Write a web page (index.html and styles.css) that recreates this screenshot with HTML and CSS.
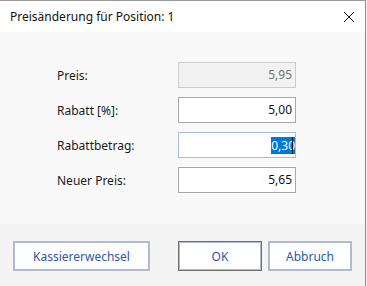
FILE: index.html
```html
<!DOCTYPE html>
<html lang="de">
  <head>
    <meta charset="UTF-8" />
    <title>Preisänderung</title>
    <link rel="stylesheet" href="styles.css">
  </head>
  <body>
    <div class="dialog">
      <div class="titlebar">
        <span class="title">Preisänderung für Position: 1</span>
        <svg class="close" width="12" height="12" viewBox="0 0 12 12">
          <path d="M1 1 L11 11 M11 1 L1 11" stroke="#111" stroke-width="1" fill="none" />
        </svg>
      </div>
      <div class="content">
        <form class="fields">
          <label>Preis:</label>
          <div class="box disabled">5,95</div>

          <label>Rabatt [%]:</label>
          <div class="box">5,00</div>

          <label>Rabattbetrag:</label>
          <div class="box focused"><span class="sel">0,30</span><span class="caret"></span></div>

          <label>Neuer Preis:</label>
          <div class="box">5,65</div>
        </form>
      </div>
      <div class="footer">
        <button class="btn wide">Kassiererwechsel</button>
        <div class="right">
          <button class="btn default">OK</button>
          <button class="btn">Abbruch</button>
        </div>
      </div>
    </div>
  </body>
</html>
```

FILE: styles.css
```css
body {
  margin: 0;
  padding: 0;
  font-family: "Noto Sans", "Open Sans", sans-serif;
  font-size: 12px;
  color: #1a1a1a;
  background: #f4f4f4;
}
.dialog {
  width: 365px;
  height: 285px;
  border-top: 1px solid #9a9a9a;
  border-right: 1px solid #8a8a8a;
  display: flex;
  flex-direction: column;
}
.titlebar {
  height: 31px;
  background: #fff;
  display: flex;
  align-items: center;
  justify-content: space-between;
  padding: 0 6px 0 10px;
}
.title {
  color: #111;
}
.close {
  margin-right: 4px;
}
.content {
  background: #f9f9f9;
  height: 192px;
  padding: 30px 0 0 57px;
  box-sizing: border-box;
}
.fields {
  display: grid;
  grid-template-columns: 121px 118px;
  grid-auto-rows: 26px;
  row-gap: 9px;
  align-items: center;
}
label {
  color: #1a1a1a;
}
.box {
  height: 26px;
  box-sizing: border-box;
  border: 1px solid #a8a8a8;
  background: #fff;
  text-align: right;
  padding: 0 3px;
  line-height: 24px;
  color: #111;
  display: flex;
  justify-content: flex-end;
  align-items: center;
}
.box.disabled {
  background: #f2f2f2;
  border-color: #cccccc;
  color: #737373;
}
.box.focused {
  border-color: #a5bde2;
  padding-right: 0;
  overflow: hidden;
}
.sel {
  background: #0078d7;
  color: #fff;
  line-height: 17px;
  margin-right: -3px;
}
.caret {
  width: 1px;
  height: 17px;
  background: #111;
  margin-right: 2px;
}
.footer {
  flex: 1;
  display: flex;
  justify-content: space-between;
  padding: 17px 13px 0 13px;
}
.right {
  display: flex;
  gap: 6px;
}
.btn {
  height: 30px;
  width: 84px;
  box-sizing: border-box;
  background: #fff;
  border: 2px solid #aebbd0;
  font-family: "Noto Sans", "Open Sans", sans-serif;
  font-size: 12px;
  color: #2f56a8;
  padding: 0;
}
.btn.wide {
  width: 137px;
}
.btn.default {
  border: 1px solid #6f6f6f;
  box-shadow: inset 0 0 0 1px #aebbd0;
}
```
